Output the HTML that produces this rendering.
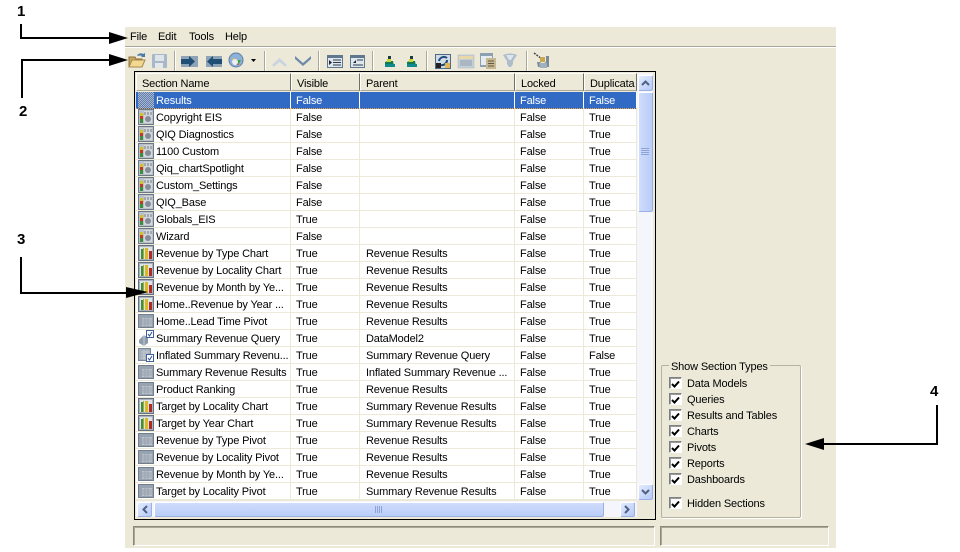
<!DOCTYPE html>
<html><head><meta charset="utf-8"><style>
html,body{margin:0;padding:0;background:#fff;width:960px;height:552px;overflow:hidden}
body{position:relative;font:11px/16px "Liberation Sans",sans-serif;color:#000;letter-spacing:-0.15px}
.a{position:absolute}
.win{left:125px;top:27px;width:711px;height:521px;background:#ece9d8}
.m{top:29px;line-height:16px;height:16px}
.sep{width:1px;height:20px;top:51px;background:#aca899;border-right:1px solid #fff}
.tw{left:134px;top:71px;width:520px;height:447px;border:1px solid #000;background:#ece9d8}
.hd{top:73px;height:18px;line-height:20px;background:#ece9d8;box-sizing:border-box;border:1px solid;border-color:#fff #716f64 #aca899 #fff;padding-left:5px;white-space:nowrap;overflow:hidden}
table{position:absolute;left:136px;top:92px;border-collapse:separate;border-spacing:0;table-layout:fixed;width:501px;background:#fff}
td{height:14px;padding:2px 0 0 5px;border-right:1px solid #ece9d8;border-bottom:1px solid #ece9d8;white-space:nowrap;overflow:hidden;line-height:14px;box-sizing:content-box}
td:first-child{padding-left:20px;position:relative}
td:nth-child(3){padding-left:6px}
td svg{position:absolute;left:2px;top:0;width:16px;height:16px}
tr.s td{background:#316ac5;color:#fff;border-right-color:#fff;border-bottom:1px dotted #e8a33d}
.btn{background:linear-gradient(135deg,#e2ebfe,#b6caf7);box-sizing:border-box;border:1px solid #fff;border-right-color:#9bb0e2;border-bottom-color:#9bb0e2;border-radius:2px}
.cb{left:669px;width:11px;height:10px;background:#fff;border:1px solid;border-color:#808080 #fff #fff #808080;box-shadow:inset 1px 1px 0 #9a9a9a}
.lb{left:687px;height:16px}
.st{box-sizing:border-box;border:1px solid;border-color:#8a8878 #fff #fff #8a8878;box-shadow:inset 1px 1px 0 #aca899}
.n{font:bold 15px/16px "Liberation Sans",sans-serif;letter-spacing:0}
</style></head><body>
<svg width="0" height="0" style="position:absolute">
<defs><pattern id="chk" width="2" height="2" patternUnits="userSpaceOnUse"><rect width="2" height="2" fill="#5f7fb5"/><rect width="1" height="1" fill="#a9b6c8"/><rect x="1" y="1" width="1" height="1" fill="#a9b6c8"/></pattern></defs>
<symbol id="ch" viewBox="0 0 16 16"><rect x="0.5" y="0.5" width="15" height="15" fill="#a9b3c0" stroke="#66717f"/><rect x="2" y="2" width="12" height="12" fill="#dfe2e6"/><rect x="3" y="4" width="2" height="10" fill="#3f8f3f"/><rect x="5" y="3" width="1" height="11" fill="#8fb050"/><rect x="7" y="3" width="3" height="11" fill="#d9b820"/><rect x="11" y="6" width="3" height="8" fill="#b02a20"/></symbol>
<symbol id="pv" viewBox="0 0 16 16"><rect x="0.5" y="1.5" width="15" height="13" fill="#97a3b1" stroke="#727e8c"/><rect x="4" y="5" width="10" height="8" fill="#bcc3cc"/><path d="M4 7h10M4 9h10M4 11h10M7 5v8M10 5v8" stroke="#98a2ae"/></symbol>
<symbol id="db" viewBox="0 0 16 16"><rect x="0.5" y="0.5" width="15" height="15" fill="#b9c1cb" stroke="#6c7886"/><rect x="6" y="2" width="8" height="12" fill="#d3d7dc"/><rect x="2" y="4" width="3" height="3" fill="#d8c020"/><rect x="2" y="7" width="3" height="3" fill="#c03a20"/><rect x="2" y="10" width="3" height="4" fill="#3a8f3a"/><path d="M7 3v3M10 3v3M13 3v3" stroke="#6f7884"/><circle cx="10" cy="10" r="3" fill="#838c98"/></symbol>
<symbol id="qu" viewBox="0 0 16 16"><path d="M1 10l5-5 4 3v5l-4 3-5-3z" fill="#8d9cad"/><path d="M6 5v11" stroke="#c9d1db"/><rect x="8.500" y="0.500" width="7" height="7" fill="#fff" stroke="#3c5fa0"/><path d="M10 4l1.500 2L14 2" stroke="#2a4a90" fill="none"/></symbol>
<symbol id="if" viewBox="0 0 16 16"><rect x="0.500" y="1.500" width="12" height="12" fill="#a3aebb" stroke="#7b8794"/><path d="M3 5h9M3 8h9M3 11h9M6 3v10M9 3v10" stroke="#c5cbd2"/><rect x="8.500" y="7.500" width="7" height="7" fill="#fff" stroke="#3c5fa0"/><path d="M10 11l1.500 2L14 9" stroke="#2a4a90" fill="none"/></symbol>
<symbol id="re" viewBox="0 0 16 16"><rect x="0" y="0" width="16" height="16" fill="url(#chk)"/></symbol>
</svg>

<div class="a win"></div>
<div class="a" style="left:125px;top:46px;width:711px;height:1px;background:#aca899"></div>
<div class="a" style="left:125px;top:47px;width:711px;height:1px;background:#fff"></div>
<div class="a m" style="left:130px">File</div><div class="a m" style="left:158px">Edit</div><div class="a m" style="left:189px">Tools</div><div class="a m" style="left:225px">Help</div>

<!-- toolbar -->
<div class="a sep" style="left:174px"></div><div class="a sep" style="left:264px"></div><div class="a sep" style="left:318px"></div><div class="a sep" style="left:372px"></div><div class="a sep" style="left:426px"></div><div class="a sep" style="left:526px"></div>
<svg class="a" style="left:125px;top:48px" width="430" height="23" viewBox="125 48 430 23">
<path d="M129 57h6l1 2h6v7h-13z" fill="#c8a860" stroke="#8a7040"/><path d="M129 67l3-7h13l-3 7z" fill="#f3d890" stroke="#a58a50"/><path d="M137 55q4-3 6-1l2-1v4h-4l1-1q-2-1-4 0z" fill="#4a7aa8"/>
<rect x="152" y="54" width="15" height="14" rx="1" fill="#a8b8c8"/><rect x="155" y="55" width="9" height="6" fill="#dde4ea"/><rect x="155" y="63" width="8" height="5" fill="#e4e8ec"/>
<rect x="181" y="56" width="17" height="11" fill="#8ea3b5"/><path d="M181 59h8v-3l6 5.500-6 5.500v-3h-8z" fill="#1f4f74"/>
<rect x="206" y="56" width="16" height="11" fill="#8ea3b5"/><path d="M222 59h-9v-3l-6 5.500 6 5.500v-3h9z" fill="#1f4f74"/>
<circle cx="236" cy="60" r="7" fill="#8fb0d8" stroke="#5f7ea5"/><path d="M232 64l4-5 3 6z" fill="#d04030"/><path d="M232 58l4 1-2 4z" fill="#e0c030"/><path d="M236 60l3 4 2-4z" fill="#40a040"/><circle cx="235" cy="62" r="3" fill="#e8eef5"/>
<path d="M251 59h5l-2.500 3z" fill="#000"/>
<path d="M272 65l7.500-7 7.500 7-2 1.500-5.500-4.500-5.500 4.500z" fill="#c8d4de"/>
<path d="M295 56l8 7 8-7 0 3-8 7-8-7z" fill="#6f8aa6"/>
<rect x="327" y="55" width="16" height="13" fill="#5f7890"/><rect x="328" y="58" width="14" height="9" fill="#dfe6ec"/><path d="M329 60v5l3-2.500z" fill="#1a2a3a"/><path d="M333 60h8M333 62.500h8M333 65h8" stroke="#2a3a50"/>
<rect x="350" y="55" width="15" height="13" fill="#5f7890"/><rect x="351" y="58" width="13" height="9" fill="#dfe6ec"/><path d="M353 63l3-3v3z" fill="#1a2a3a"/><path d="M357 60h6M353 65h10" stroke="#2a3a50"/>
<path d="M385 67v-5l3-1v-2h3v2h2l1 5z" fill="#127a50"/><rect x="388" y="56" width="3" height="6" fill="#1d3c40"/><rect x="385" y="64" width="10" height="3" fill="#0c8a90"/><rect x="387" y="59" width="4" height="3" fill="#c8d830"/>
<path d="M407 67v-5l3-1v-2h3v2h2l1 5z" fill="#127a50"/><rect x="410" y="56" width="3" height="6" fill="#1d3c40"/><rect x="407" y="64" width="10" height="3" fill="#0c8a90"/><rect x="409" y="59" width="4" height="3" fill="#c8d830"/>
<rect x="435" y="54" width="16" height="15" fill="#4f6a84"/><rect x="436" y="55" width="14" height="13" fill="#d0dce8"/><path d="M439 61a5 5 0 0 1 8-3M447 60a5 5 0 0 1-6 5" stroke="#234a7a" stroke-width="2" fill="none"/><rect x="436" y="63" width="5" height="5" fill="#222"/><rect x="445" y="63" width="5" height="5" fill="#e0b850"/>
<rect x="458" y="55" width="16" height="13" fill="#c5cfd8" stroke="#a8b2bc" stroke-width="0.500"/><rect x="459" y="56" width="14" height="3" fill="#e8d8a8"/><path d="M460 61h12M460 63h12M460 65h12" stroke="#8f9eac"/>
<rect x="480" y="53" width="13" height="14" fill="#8da0b2"/><rect x="481" y="56" width="11" height="9" fill="#e6ebf0"/><rect x="486" y="58" width="10" height="11" fill="#c8b890"/><path d="M488 61h6M488 63.500h6M488 66h6" stroke="#5f5a48"/>
<path d="M503 55q7-3 14 0l-4 6v3l-2 3h-2l-2-3v-3z" fill="#aebccb"/><path d="M506 55h8l-3 5h-2z" fill="#dce4ec"/>
<path d="M534 53l8 6" stroke="#4a4a4a" stroke-dasharray="2 1" stroke-width="1.500"/><rect x="540" y="57" width="5" height="5" fill="#c8a850"/><path d="M546 56h3v11h-11l-1-5h3q2 3 6 0z" fill="#7a8a98"/><path d="M539 63h8v5h-7z" fill="#9fb0be"/>
</svg>

<!-- grid frame -->
<div class="a tw"></div>
<div class="a hd" style="left:136px;width:155px">Section Name</div>
<div class="a hd" style="left:291px;width:69px">Visible</div>
<div class="a hd" style="left:360px;width:155px">Parent</div>
<div class="a hd" style="left:515px;width:69px">Locked</div>
<div class="a hd" style="left:584px;width:53px">Duplicata</div>

<table><colgroup><col style="width:155px"><col style="width:69px"><col style="width:155px"><col style="width:69px"><col style="width:53px"></colgroup>
<tr class="s"><td><svg style="left:2px"><use href="#re"/></svg>Results</td><td>False</td><td></td><td>False</td><td>False</td></tr>
<tr><td><svg><use href="#db"/></svg>Copyright EIS</td><td>False</td><td></td><td>False</td><td>True</td></tr>
<tr><td><svg><use href="#db"/></svg>QIQ Diagnostics</td><td>False</td><td></td><td>False</td><td>True</td></tr>
<tr><td><svg><use href="#db"/></svg>1100 Custom</td><td>False</td><td></td><td>False</td><td>True</td></tr>
<tr><td><svg><use href="#db"/></svg>Qiq_chartSpotlight</td><td>False</td><td></td><td>False</td><td>True</td></tr>
<tr><td><svg><use href="#db"/></svg>Custom_Settings</td><td>False</td><td></td><td>False</td><td>True</td></tr>
<tr><td><svg><use href="#db"/></svg>QIQ_Base</td><td>False</td><td></td><td>False</td><td>True</td></tr>
<tr><td><svg><use href="#db"/></svg>Globals_EIS</td><td>True</td><td></td><td>False</td><td>True</td></tr>
<tr><td><svg><use href="#db"/></svg>Wizard</td><td>False</td><td></td><td>False</td><td>True</td></tr>
<tr><td><svg><use href="#ch"/></svg>Revenue by Type Chart</td><td>True</td><td>Revenue Results</td><td>False</td><td>True</td></tr>
<tr><td><svg><use href="#ch"/></svg>Revenue by Locality Chart</td><td>True</td><td>Revenue Results</td><td>False</td><td>True</td></tr>
<tr><td><svg><use href="#ch"/></svg>Revenue by Month by Ye...</td><td>True</td><td>Revenue Results</td><td>False</td><td>True</td></tr>
<tr><td><svg><use href="#ch"/></svg>Home..Revenue by Year ...</td><td>True</td><td>Revenue Results</td><td>False</td><td>True</td></tr>
<tr><td><svg><use href="#pv"/></svg>Home..Lead Time Pivot</td><td>True</td><td>Revenue Results</td><td>False</td><td>True</td></tr>
<tr><td><svg><use href="#qu"/></svg>Summary Revenue Query</td><td>True</td><td>DataModel2</td><td>False</td><td>True</td></tr>
<tr><td><svg><use href="#if"/></svg>Inflated Summary Revenu...</td><td>True</td><td>Summary Revenue Query</td><td>False</td><td>False</td></tr>
<tr><td><svg><use href="#pv"/></svg>Summary Revenue Results</td><td>True</td><td>Inflated Summary Revenue ...</td><td>False</td><td>True</td></tr>
<tr><td><svg><use href="#pv"/></svg>Product Ranking</td><td>True</td><td>Revenue Results</td><td>False</td><td>True</td></tr>
<tr><td><svg><use href="#ch"/></svg>Target by Locality Chart</td><td>True</td><td>Summary Revenue Results</td><td>False</td><td>True</td></tr>
<tr><td><svg><use href="#ch"/></svg>Target by Year Chart</td><td>True</td><td>Summary Revenue Results</td><td>False</td><td>True</td></tr>
<tr><td><svg><use href="#pv"/></svg>Revenue by Type Pivot</td><td>True</td><td>Revenue Results</td><td>False</td><td>True</td></tr>
<tr><td><svg><use href="#pv"/></svg>Revenue by Locality Pivot</td><td>True</td><td>Revenue Results</td><td>False</td><td>True</td></tr>
<tr><td><svg><use href="#pv"/></svg>Revenue by Month by Ye...</td><td>True</td><td>Revenue Results</td><td>False</td><td>True</td></tr>
<tr><td><svg><use href="#pv"/></svg>Target by Locality Pivot</td><td>True</td><td>Summary Revenue Results</td><td>False</td><td>True</td></tr>
</table>

<!-- vertical scrollbar -->
<div class="a" style="left:637px;top:73px;width:16px;height:428px;background:#f4f6fc"></div>
<div class="a btn" style="left:638px;top:75px;width:15px;height:16px"></div>
<div class="a btn" style="left:638px;top:92px;width:15px;height:120px;background:linear-gradient(90deg,#cfdcfb,#b9cdf8)"></div>
<div class="a btn" style="left:638px;top:484px;width:15px;height:16px"></div>
<!-- horizontal scrollbar -->
<div class="a" style="left:136px;top:501px;width:501px;height:16px;background:#f4f6fc"></div>
<div class="a" style="left:637px;top:500px;width:17px;height:18px;background:#ece9d8"></div>
<div class="a btn" style="left:137px;top:502px;width:15px;height:15px"></div>
<div class="a btn" style="left:154px;top:502px;width:450px;height:15px;background:linear-gradient(180deg,#cfdcfb,#b9cdf8)"></div>
<div class="a btn" style="left:620px;top:502px;width:15px;height:15px"></div>
<svg class="a" style="left:134px;top:71px" width="522" height="448" viewBox="134 71 522 448">
<path d="M642 85l3.500-3.500 3.500 3.500" stroke="#4d6185" stroke-width="2" fill="none"/>
<path d="M642 490l3.500 3.500 3.500-3.500" stroke="#4d6185" stroke-width="2" fill="none"/>
<path d="M147 506l-3.500 3.500 3.500 3.500" stroke="#4d6185" stroke-width="2" fill="none"/>
<path d="M625 506l3.500 3.500-3.500 3.500" stroke="#4d6185" stroke-width="2" fill="none"/>
<path d="M641 148.500h8M641 150.500h8M641 152.500h8M641 154.500h8" stroke="#8ea4d8"/>
<path d="M375.500 506v7M377.500 506v7M379.500 506v7M381.500 506v7" stroke="#8ea4d8"/>
</svg>

<!-- group box -->
<div class="a" style="left:661px;top:365px;width:138px;height:151px;border:1px solid #b5b2a1;box-shadow:1px 1px 0 #fff;border-radius:2px"></div>
<div class="a" style="left:669px;top:359px;background:#ece9d8;padding:0 2px">Show Section Types</div>
<div class="a cb" style="top:377px"></div><div class="a lb" style="top:376px">Data Models</div>
<div class="a cb" style="top:393px"></div><div class="a lb" style="top:392px">Queries</div>
<div class="a cb" style="top:409px"></div><div class="a lb" style="top:408px">Results and Tables</div>
<div class="a cb" style="top:425px"></div><div class="a lb" style="top:424px">Charts</div>
<div class="a cb" style="top:441px"></div><div class="a lb" style="top:440px">Pivots</div>
<div class="a cb" style="top:457px"></div><div class="a lb" style="top:456px">Reports</div>
<div class="a cb" style="top:473px"></div><div class="a lb" style="top:472px">Dashboards</div>
<div class="a cb" style="top:497px"></div><div class="a lb" style="top:496px">Hidden Sections</div>
<svg class="a" style="left:669px;top:378px" width="14" height="134" viewBox="0 0 14 134">
<path d="M3 6l2.500 2.500L10 3.500M3 22l2.500 2.500L10 19.500M3 38l2.500 2.500L10 35.500M3 54l2.500 2.500L10 51.500M3 70l2.500 2.500L10 67.500M3 86l2.500 2.500L10 83.500M3 102l2.500 2.500L10 99.500M3 126l2.500 2.500L10 123.500" stroke="#000" stroke-width="2" fill="none"/>
</svg>

<!-- status bar -->
<div class="a st" style="left:133px;top:526px;width:522px;height:20px"></div>
<div class="a st" style="left:660px;top:526px;width:169px;height:20px"></div>

<!-- callouts -->
<svg class="a" style="left:0;top:0" width="960" height="552" viewBox="0 0 960 552">
<g fill="none" stroke="#000" stroke-width="2">
<path d="M21 24V38H112"/>
<path d="M22 98V60H112"/>
<path d="M21 257V293H128"/>
<path d="M937 405V444H822"/>
</g>
<path d="M128 38L109 32V44z"/><path d="M128 60L109 54V66z"/><path d="M148 292L126 287V298z"/><path d="M805 444L824 438V450z"/>
</svg>
<div class="a n" style="left:17px;top:4px">1</div>
<div class="a n" style="left:19px;top:104px">2</div>
<div class="a n" style="left:17px;top:232px">3</div>
<div class="a n" style="left:930px;top:384px">4</div>
</body></html>
